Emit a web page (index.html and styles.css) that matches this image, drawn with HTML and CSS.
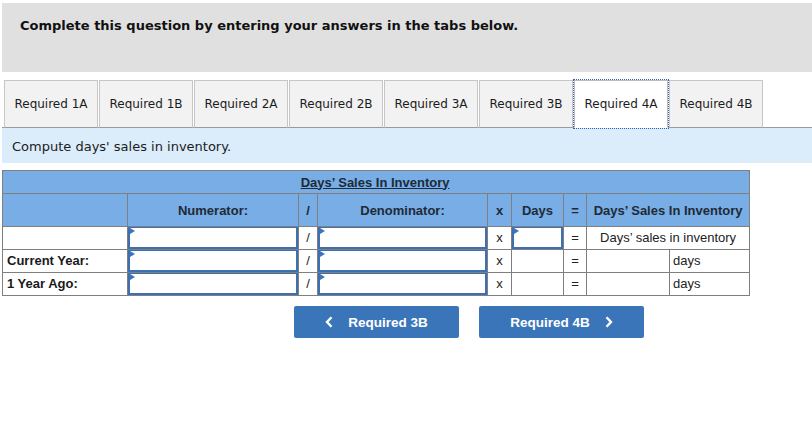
FILE: index.html
```html
<!DOCTYPE html>
<html>
<head>
<meta charset="utf-8">
<link rel="stylesheet" href="styles.css">
</head>
<body>
<div class="banner">Complete this question by entering your answers in the tabs below.</div>

<div class="tabs">
  <div class="tab">Required 1A</div>
  <div class="tab">Required 1B</div>
  <div class="tab">Required 2A</div>
  <div class="tab">Required 2B</div>
  <div class="tab">Required 3A</div>
  <div class="tab">Required 3B</div>
  <div class="tab active">Required 4A</div>
  <div class="tab">Required 4B</div>
</div>

<div class="instruction">Compute days' sales in inventory.</div>

<table class="grid">
  <colgroup>
    <col class="c-label">
    <col class="c-num">
    <col class="c-op">
    <col class="c-den">
    <col class="c-x">
    <col class="c-days">
    <col class="c-eq">
    <col class="c-res-a">
    <col class="c-res-b">
  </colgroup>
  <tr class="title-row">
    <th colspan="9"><span class="title">Days’ Sales In Inventory</span></th>
  </tr>
  <tr class="head-row">
    <th></th>
    <th>Numerator:</th>
    <th>/</th>
    <th>Denominator:</th>
    <th>x</th>
    <th>Days</th>
    <th>=</th>
    <th colspan="2">Days’ Sales In Inventory</th>
  </tr>
  <tr class="data-row">
    <td class="label"></td>
    <td class="in"><span class="field"><input type="text"></span></td>
    <td class="op">/</td>
    <td class="in"><span class="field"><input type="text"></span></td>
    <td class="op">x</td>
    <td class="in"><span class="field"><input type="text"></span></td>
    <td class="op">=</td>
    <td colspan="2" class="center">Days’ sales in inventory</td>
  </tr>
  <tr class="data-row">
    <td class="label">Current Year:</td>
    <td class="in"><span class="field"><input type="text"></span></td>
    <td class="op">/</td>
    <td class="in"><span class="field"><input type="text"></span></td>
    <td class="op">x</td>
    <td></td>
    <td class="op">=</td>
    <td></td>
    <td class="unit">days</td>
  </tr>
  <tr class="data-row">
    <td class="label">1 Year Ago:</td>
    <td class="in"><span class="field"><input type="text"></span></td>
    <td class="op">/</td>
    <td class="in"><span class="field"><input type="text"></span></td>
    <td class="op">x</td>
    <td></td>
    <td class="op">=</td>
    <td></td>
    <td class="unit">days</td>
  </tr>
</table>

<div class="nav">
  <button class="btn" type="button">
    <svg class="chev" width="8" height="12" viewBox="0 0 8 12"><path d="M6.5 1.2 L2 6 L6.5 10.8" fill="none" stroke="#fff" stroke-width="2.4"/></svg>
    <span>Required 3B</span>
  </button>
  <button class="btn" type="button">
    <span>Required 4B</span>
    <svg class="chev" width="8" height="12" viewBox="0 0 8 12"><path d="M1.5 1.2 L6 6 L1.5 10.8" fill="none" stroke="#fff" stroke-width="2.4"/></svg>
  </button>
</div>
</body>
</html>
```

FILE: styles.css
```css
* { box-sizing: border-box; }

body {
  margin: 0;
  background: #fff;
  font-family: "DejaVu Sans", Verdana, sans-serif;
  color: #1c1c1c;
}

.banner {
  margin: 3px 0 0 2px;
  height: 69px;
  background: #e0e0e0;
  padding: 15px 0 0 18px;
  font-size: 13px;
  font-weight: bold;
  line-height: 16px;
  color: #111;
}

.tabs {
  display: flex;
  gap: 1px;
  margin: 8px 0 0 2px;
  padding-left: 2px;
  border-bottom: 1px solid #9a9a9a;
}

.tab {
  width: 94px;
  height: 48px;
  margin-bottom: -1px;
  border: 1px solid #c6c6c6;
  border-bottom: 1px solid #9a9a9a;
  background: #f2f2f2;
  font-size: 12px;
  line-height: 47px;
  text-align: center;
  color: #1c1c1c;
}

.tab.active {
  background: #fff;
  border-color: #bcbcbc;
  border-bottom-color: #fff;
  outline: 1px dotted #2a62b0;
}

.instruction {
  margin-left: 2px;
  height: 35px;
  background: #dbecfa;
  padding: 11px 0 0 10px;
  font-size: 13px;
  line-height: 16px;
  color: #1c1c1c;
}

.grid {
  margin: 7px 0 0 2px;
  width: 747px;
  border-collapse: collapse;
  table-layout: fixed;
  font-family: "Liberation Sans", Arial, sans-serif;
  font-size: 13px;
  color: #222;
}

.c-label { width: 125px; }
.c-num { width: 171px; }
.c-op { width: 19px; }
.c-den { width: 170px; }
.c-x { width: 24px; }
.c-days { width: 52px; }
.c-eq { width: 23px; }
.c-res-a { width: 83px; }
.c-res-b { width: 80px; }

.grid th,
.grid td {
  border: 1px solid #7f7f7f;
  padding: 0;
}

.grid th {
  background: #78ade5;
  font-weight: bold;
  text-align: center;
  color: #1f2a36;
}

.title-row th { height: 23px; }

.title {
  text-decoration: underline;
  padding-right: 2px;
}

.head-row th { height: 33px; }

.data-row td {
  height: 23px;
  line-height: 16px;
}

.label {
  font-weight: bold;
  padding-left: 4px !important;
  color: #1a1a1a;
}

.op,
.center { text-align: center; }

.unit { padding-left: 3px !important; }

.field {
  position: relative;
  display: block;
  height: 22px;
}

.field::before {
  content: "";
  position: absolute;
  left: 2px;
  top: 1px;
  border-top: 3px solid transparent;
  border-bottom: 3px solid transparent;
  border-left: 5px solid #3d74bd;
}

.field input {
  display: block;
  width: 100%;
  height: 22px;
  margin: 0;
  padding: 0 4px;
  border: 2px solid #3d6fb3;
  border-top-width: 1px;
  background: #fff;
  font: 13px "Liberation Sans", Arial, sans-serif;
  outline: none;
}

.nav {
  display: flex;
  gap: 20px;
  margin: 10px 0 0 294px;
}

.btn {
  display: flex;
  align-items: center;
  justify-content: center;
  gap: 15px;
  width: 165px;
  height: 32px;
  padding: 0;
  border: none;
  border-radius: 2px;
  background: #3a75b9;
  color: #fff;
  font-family: "Liberation Sans", Arial, sans-serif;
  font-weight: bold;
  font-size: 13.5px;
}

.chev { display: block; }
```
